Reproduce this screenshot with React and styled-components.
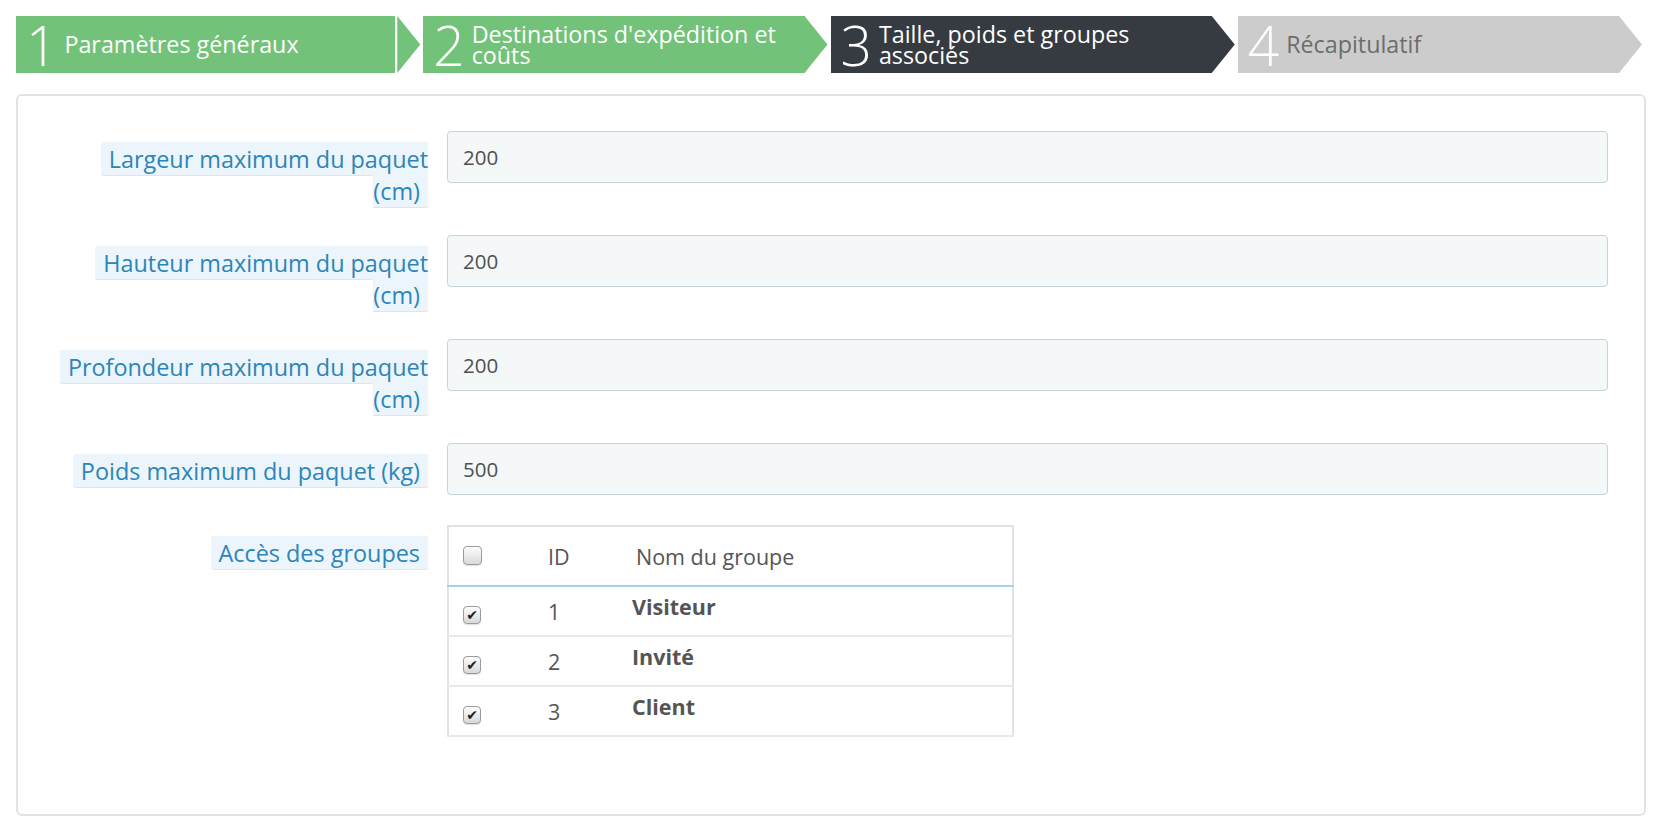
import React from "react";
import styled, { createGlobalStyle } from "styled-components";

const GlobalStyle = createGlobalStyle`
  body {
    margin: 0;
    background: #fff;
    font-family: "Open Sans", "Liberation Sans", sans-serif;
  }
`;

const steps = [
  { n: 1, text: "Paramètres généraux", bg: "#72c279", fg: "#fff", split: true },
  { n: 2, text: "Destinations d'expédition et coûts", bg: "#72c279", fg: "#fff" },
  { n: 3, text: "Taille, poids et groupes associés", bg: "#363a41", fg: "#fff" },
  { n: 4, text: "Récapitulatif", bg: "#cccccc", fg: "#6d6d6d" },
];

const fields = [
  { lines: ["Largeur maximum du paquet", "(cm)"], value: "200" },
  { lines: ["Hauteur maximum du paquet", "(cm)"], value: "200" },
  { lines: ["Profondeur maximum du paquet", "(cm)"], value: "200" },
  { lines: ["Poids maximum du paquet (kg)"], value: "500" },
];

const groups = [
  { id: 1, name: "Visiteur" },
  { id: 2, name: "Invité" },
  { id: 3, name: "Client" },
];

const Page = styled.div`
  padding: 16px 16px 0 16px;
`;

// wizard steps
const Steps = styled.ol`
  display: grid;
  grid-template-columns: repeat(4, 1fr);
  column-gap: 3px;
  width: 1626px;
  height: 57px;
  margin: 0;
  padding: 0;
  list-style: none;
`;

const Step = styled.li`
  display: flex;
`;

const StepBody = styled.div`
  flex: 1;
  display: flex;
  align-items: center;
  padding: 0 4px 0 10px;
  background: ${(p) => p.$bg};
  color: ${(p) => p.$fg};
`;

const StepTip = styled.div`
  flex: none;
  width: 23px;
  margin-left: ${(p) => (p.$split ? "2px" : "0")};
  background: ${(p) => p.$bg};
  clip-path: polygon(0 0, 100% 50%, 0 100%);
`;

const StepNumber = styled.span`
  flex: none;
  margin-right: 7px;
  font-size: 55px;
  font-weight: 300;
  line-height: 1;
  color: #fff;
`;

const StepText = styled.span`
  font-size: 23.3px;
  line-height: 21px;
`;

// form panel
const Panel = styled.section`
  box-sizing: border-box;
  width: 1630px;
  margin-top: 21px;
  padding: 35px 36px 77px 36px;
  border: 2px solid #e3e3e3;
  border-radius: 6px;
  display: flex;
  flex-direction: column;
  gap: 28px;
`;

const Row = styled.div`
  display: grid;
  grid-template-columns: 374px 1fr;
  column-gap: 19px;
  align-items: start;
  margin-top: ${(p) => (p.$shift ? "2px" : "0")};
`;

const Label = styled.div`
  padding-top: 12px;
  text-align: right;
  white-space: nowrap;
  font-size: 23.4px;
  line-height: 32px;
`;

const Hint = styled.span`
  padding: 1px 8px 0 8px;
  border-radius: 3px;
  border-bottom: 1px solid #d4e8f4;
  background: #ebf5fb;
  color: #2d85b8;
`;

const Input = styled.input`
  box-sizing: border-box;
  width: 100%;
  height: 52px;
  padding: 0 15px;
  border: 1px solid #c4d4da;
  border-radius: 4px;
  background: #f4f8f9;
  font-family: "Open Sans", "Liberation Sans", sans-serif;
  font-size: 20.5px;
  color: #505050;
  outline: none;
`;

const GroupTable = styled.table`
  width: 567px;
  border-collapse: collapse;
  border: 2px solid #e2e2e2;
  font-size: 21.5px;
  color: #555;
`;

const Th = styled.th`
  height: 58px;
  padding: 0;
  padding-left: ${(p) => p.$pad || "0"};
  width: ${(p) => p.$w || "auto"};
  text-align: left;
  font-weight: 400;
  vertical-align: middle;
  border-bottom: 2px solid #a5d1ea;
`;

const Td = styled.td`
  height: 48px;
  padding: 0;
  padding-left: ${(p) => p.$pad || "0"};
  vertical-align: middle;
  border-bottom: 2px solid #e8ebed;
`;

const GroupName = styled.span`
  display: inline-block;
  margin: 0 0 9px -4px;
  font-weight: 700;
`;

const Check = styled.span`
  box-sizing: border-box;
  display: inline-flex;
  align-items: center;
  justify-content: center;
  width: ${(p) => p.$size}px;
  height: ${(p) => p.$size}px;
  margin-top: 4px;
  border: 1px solid #9c9c9c;
  border-radius: 4px;
  background: linear-gradient(#fdfdfd, #d9d9d9);
  box-shadow: 0 1px 1px rgba(0, 0, 0, 0.12);
  font-family: "DejaVu Sans", sans-serif;
  font-size: 14px;
  line-height: 1;
  color: #1e1e1e;
`;

const App = () => {
  return (
    <Page>
      <GlobalStyle />
      <Steps>
        {steps.map((s) => (
          <Step key={s.n}>
            <StepBody $bg={s.bg} $fg={s.fg}>
              <StepNumber>{s.n}</StepNumber>
              <StepText>{s.text}</StepText>
            </StepBody>
            <StepTip $bg={s.bg} $split={s.split} />
          </Step>
        ))}
      </Steps>

      <Panel>
        {fields.map((f) => (
          <Row key={f.lines[0]}>
            <Label>
              <Hint>
                {f.lines.map((line, i) => (
                  <React.Fragment key={line}>
                    {i > 0 && <br />}
                    {line}
                  </React.Fragment>
                ))}
              </Hint>
            </Label>
            <Input defaultValue={f.value} />
          </Row>
        ))}

        <Row $shift>
          <Label>
            <Hint>Accès des groupes</Hint>
          </Label>
          <GroupTable>
            <thead>
              <tr>
                <Th $w="85px" $pad="14px">
                  <Check $size={19} />
                </Th>
                <Th $w="88px">ID</Th>
                <Th>Nom du groupe</Th>
              </tr>
            </thead>
            <tbody>
              {groups.map((g) => (
                <tr key={g.id}>
                  <Td $pad="14px">
                    <Check $size={18}>✔</Check>
                  </Td>
                  <Td>{g.id}</Td>
                  <Td>
                    <GroupName>{g.name}</GroupName>
                  </Td>
                </tr>
              ))}
            </tbody>
          </GroupTable>
        </Row>
      </Panel>
    </Page>
  );
};

export default App;
